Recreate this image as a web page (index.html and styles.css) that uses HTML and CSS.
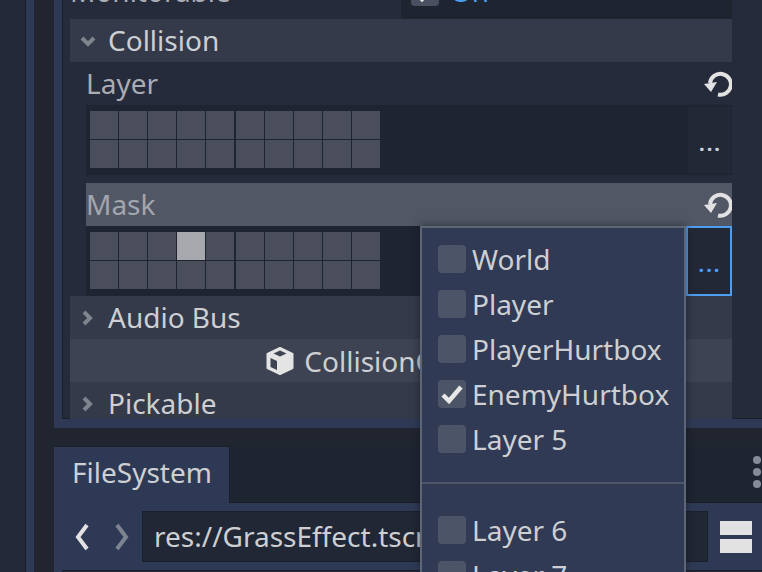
FILE: index.html
```html
<!DOCTYPE html>
<html lang="en">
<head>
    <meta charset="UTF-8">
    <title>Inspector - Collision Layers</title>
    <link rel="stylesheet" href="styles.css">
</head>
<body>
    <div class="gutter"></div>
    <div class="split"></div>
    <div class="main">
        <div class="inspector">
            <div class="inspector-inner">
                <div class="props">
                    <div class="monitor-row">
                        <div class="monitor-name">Monitorable</div>
                        <div class="monitor-value">
                            <span class="monitor-box check-on"><svg viewBox="0 0 28 28"><path d="M5 15l6 6L23 7" /></svg></span>
                            <span class="monitor-on">On</span>
                        </div>
                    </div>
                    <div class="section">
                        <svg class="arrow-down" viewBox="0 0 16 10"><path d="M2 2l6 6 6-6" /></svg>
                        <span>Collision</span>
                    </div>
                    <div class="prop-group">
                        <div class="prop-label">
                            <span>Layer</span>
                            <svg class="revert" viewBox="0 0 28 26"><path d="M6 12A10.5 10.5 0 1 1 14 23.5" /><path class="fill" d="M0 13L13 11 7 21z" /></svg>
                        </div>
                        <div class="layer-box">
                            <div class="layer-grid">
                                <div class="layer-col">
                                    <i></i><i></i><i></i><i></i><i></i>
                                    <i></i><i></i><i></i><i></i><i></i>
                                </div>
                                <div class="layer-col">
                                    <i></i><i></i><i></i><i></i><i></i>
                                    <i></i><i></i><i></i><i></i><i></i>
                                </div>
                            </div>
                            <div class="more-btn">...</div>
                        </div>
                        <div class="prop-label hovered">
                            <span>Mask</span>
                            <svg class="revert" viewBox="0 0 28 26"><path d="M6 12A10.5 10.5 0 1 1 14 23.5" /><path class="fill" d="M0 13L13 11 7 21z" /></svg>
                        </div>
                        <div class="layer-box">
                            <div class="layer-grid">
                                <div class="layer-col">
                                    <i></i><i></i><i></i><i class="on"></i><i></i>
                                    <i></i><i></i><i></i><i></i><i></i>
                                </div>
                                <div class="layer-col">
                                    <i></i><i></i><i></i><i></i><i></i>
                                    <i></i><i></i><i></i><i></i><i></i>
                                </div>
                            </div>
                            <div class="more-btn active">...</div>
                        </div>
                    </div>
                    <div class="section">
                        <svg class="arrow-right" viewBox="0 0 10 16"><path d="M2 2l6 6-6 6" /></svg>
                        <span>Audio Bus</span>
                    </div>
                    <div class="class-btn">
                        <svg class="cube" viewBox="0 0 28 28">
                            <path d="M14 1L26.500 7v14L14 27 1.500 21V7z" fill="#e4e4e4" stroke="#e4e4e4" stroke-width="2" stroke-linejoin="round" />
                            <path d="M14 3.500l6.500 3-6.500 3-6.500-3z" fill="#3d4352" />
                            <path d="M4.500 11l6.500 3v9l-6.500-3z" fill="#3d4352" />
                        </svg>
                        <span>CollisionObject2D</span>
                    </div>
                    <div class="section">
                        <svg class="arrow-right" viewBox="0 0 10 16"><path d="M2 2l6 6-6 6" /></svg>
                        <span>Pickable</span>
                    </div>
                </div>
            </div>
        </div>
        <div class="dock">
            <div class="dock-tabs">
                <div class="tab">FileSystem</div>
                <div class="dock-dots"><b></b><b></b><b></b></div>
            </div>
            <div class="dock-body">
                <div class="path-bar">
                    <svg class="nav" viewBox="0 0 16 28"><path d="M13 2L4 14l9 12" /></svg>
                    <svg class="nav off" viewBox="0 0 16 28"><path d="M3 2l9 12-9 12" /></svg>
                    <div class="path-input">res://GrassEffect.tscn</div>
                    <div class="split-icon"><b></b><b></b></div>
                </div>
                <div class="file-list"></div>
            </div>
        </div>
    </div>

    <!-- layers popup -->
    <div class="popup">
        <div class="popup-item"><span class="check"></span>World</div>
        <div class="popup-item"><span class="check"></span>Player</div>
        <div class="popup-item"><span class="check"></span>PlayerHurtbox</div>
        <div class="popup-item">
            <span class="check check-on"><svg viewBox="0 0 28 28"><path d="M5 15l6 6L23 7" /></svg></span>EnemyHurtbox
        </div>
        <div class="popup-item"><span class="check"></span>Layer 5</div>
        <div class="popup-sep"></div>
        <div class="popup-item"><span class="check"></span>Layer 6</div>
        <div class="popup-item"><span class="check"></span>Layer 7</div>
    </div>
</body>
</html>
```

FILE: styles.css
```css
html, body {
    margin: 0;
    height: 572px;
    overflow: hidden;
}
body {
    display: flex;
    background-color: #20252f;
    font-family: "Noto Sans", sans-serif;
    font-size: 28px;
    color: #cdcfd2;
}
.gutter {
    width: 25px;
    flex: none;
    background-color: #232938;
    border-right: 1px solid #1b1f29;
}
.split {
    width: 8px;
    flex: none;
    background-color: #2e3a55;
    margin-right: 20px;
}
.main {
    flex: 1;
    min-width: 0;
    display: flex;
    flex-direction: column;
}

/* Inspector */
.inspector {
    height: 428px;
    flex: none;
    background-color: #2e3a55;
    padding: 0 0 9px 8px;
    box-sizing: border-box;
}
.inspector-inner {
    height: 100%;
    background-color: #252b3a;
    border-left: 1px solid #1b1f29;
    border-bottom: 1px solid #1b1f29;
    padding: 0 30px 0 7px;
    box-sizing: border-box;
}
.props {
    height: 419px;
    overflow: hidden;
}
.monitor-row {
    height: 19px;
    display: flex;
    overflow: hidden;
}
.monitor-name {
    width: 331px;
    margin-top: -27px;
    line-height: 37px;
    color: #a9acb3;
}
.monitor-value {
    flex: 1;
    background-color: #1f2431;
    display: flex;
    padding-left: 10px;
}
.monitor-box {
    width: 28px;
    height: 28px;
    margin-top: -22px;
    border-radius: 4px;
    background-color: #4a5060;
}
.monitor-on {
    margin: -27px 0 0 11px;
    line-height: 37px;
    color: #4d9df0;
}
.section {
    height: 43px;
    display: flex;
    align-items: center;
    background-color: #343a4a;
    line-height: 43px;
}
.section span {
    margin-left: 10px;
}
.arrow-down, .arrow-right {
    fill: none;
    stroke: #80848f;
    stroke-width: 4px;
    overflow: visible;
}
.arrow-down {
    width: 16px;
    height: 10px;
    margin-left: 10px;
    margin-right: 2px;
}
.arrow-right {
    width: 10px;
    height: 16px;
    margin-left: 12px;
    margin-right: 6px;
}
.prop-group {
    padding-left: 16px;
}
.prop-label {
    height: 43px;
    display: flex;
    align-items: center;
    justify-content: space-between;
    color: #a9acb3;
}
.prop-label.hovered {
    background-color: #525765;
    margin-top: 8px;
    color: #a2a6ae;
}
.prop-label span {
    margin-top: -2px;
}
.revert {
    width: 28px;
    height: 26px;
    fill: none;
    stroke: #e2e2e2;
    stroke-width: 4px;
}
.revert .fill {
    fill: #e2e2e2;
    stroke: none;
}
.layer-box {
    height: 70px;
    display: flex;
    background-color: #1f2431;
    box-sizing: border-box;
    padding: 6px 0 0 4px;
}
.layer-grid {
    flex: 1;
    display: flex;
    gap: 2px;
}
.layer-col {
    display: grid;
    grid-template-columns: repeat(5, 28px);
    grid-auto-rows: 28px;
    gap: 1px;
    align-self: flex-start;
}
.layer-col i {
    background-color: #494e5a;
}
.layer-col i.on {
    background-color: #a6a8ae;
}
.more-btn {
    width: 43px;
    height: 66px;
    margin: -4px 1px 0 0;
    padding-left: 2px;
    box-sizing: border-box;
    background-color: #232836;
    text-align: center;
    line-height: 74px;
    font-size: 20px;
    font-weight: bold;
    letter-spacing: 2px;
    color: #d0d2d6;
}
.more-btn.active {
    width: 46px;
    height: 70px;
    margin: -6px 0 0 0;
    border: 2px solid #4d9df0;
    color: #4d9df0;
    line-height: 74px;
}
.class-btn {
    height: 43px;
    display: flex;
    align-items: center;
    justify-content: center;
    gap: 10px;
    padding-left: 2px;
    background-color: #3d4352;
}
.cube {
    width: 28px;
    height: 28px;
}

/* FileSystem dock */
.dock {
    flex: 1;
    display: flex;
    flex-direction: column;
    margin-top: 18px;
}
.dock-tabs {
    height: 57px;
    flex: none;
    display: flex;
    justify-content: space-between;
    background-color: #1f2431;
    border-bottom: 1px solid #1b1f29;
    box-sizing: border-box;
}
.tab {
    width: 176px;
    height: 57px;
    box-sizing: border-box;
    background-color: #2e3a55;
    border-top: 1px solid #1b1f29;
    border-right: 1px solid #1b1f29;
    padding-left: 18px;
    line-height: 50px;
}
.dock-dots {
    display: flex;
    flex-direction: column;
    gap: 4px;
    margin: 10px 1px 0 0;
}
.dock-dots b {
    width: 8px;
    height: 8px;
    border-radius: 50%;
    background-color: #878b98;
}
.dock-body {
    flex: 1;
    min-height: 0;
    background-color: #2e3a55;
}
.path-bar {
    display: flex;
    align-items: center;
    margin-top: 8px;
}
.nav {
    width: 16px;
    height: 28px;
    margin-left: 20px;
    fill: none;
    stroke: #e2e2e2;
    stroke-width: 4px;
}
.nav.off {
    margin-left: 24px;
    stroke: #7d8391;
}
.path-input {
    width: 566px;
    height: 51px;
    box-sizing: border-box;
    margin-left: 12px;
    padding-left: 11px;
    background-color: #212734;
    border: 1px solid #1b1f29;
    line-height: 48px;
    white-space: nowrap;
}
.split-icon {
    margin-left: 12px;
    display: flex;
    flex-direction: column;
    gap: 4px;
}
.split-icon b {
    width: 32px;
    height: 14px;
    background-color: #e2e2e2;
}
.file-list {
    height: 2px;
    margin: 8px 0 0 8px;
    background-color: #252b3a;
    border-top: 1px solid #1b1f29;
}

/* Popup over the inspector */
.popup {
    position: absolute;
    left: 420px;
    top: 226px;
    width: 266px;
    height: 346px;
    overflow: hidden;
    box-sizing: border-box;
    background-color: #303a54;
    border: 2px solid #5d6677;
    border-bottom: none;
    box-shadow: 0 0 8px rgba(16, 19, 26, 0.55);
    padding: 8px 0 0 16px;
}
.popup-item {
    height: 45px;
    display: flex;
    align-items: center;
    gap: 6px;
    white-space: nowrap;
}
.check {
    width: 28px;
    height: 28px;
    border-radius: 4px;
    background-color: #4c5567;
    flex: none;
}
.check-on svg {
    display: block;
    fill: none;
    stroke: #e8e8e8;
    stroke-width: 4.5px;
}
.popup-sep {
    height: 2px;
    margin: 21px 0 23px -16px;
    background-color: #4e5769;
}
```
